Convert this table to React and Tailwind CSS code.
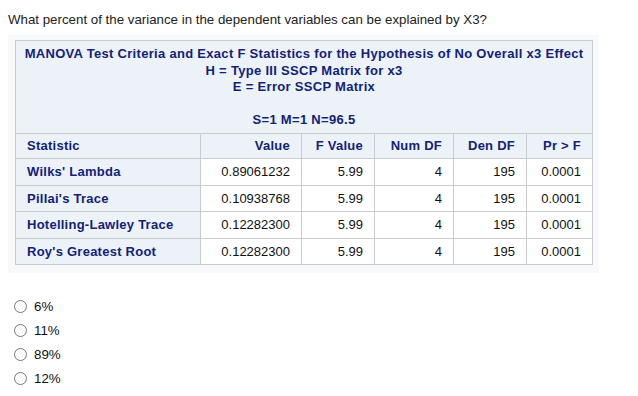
const rows = [
  ["Wilks' Lambda", "0.89061232", "5.99", "4", "195", "0.0001"],
  ["Pillai's Trace", "0.10938768", "5.99", "4", "195", "0.0001"],
  ["Hotelling-Lawley Trace", "0.12282300", "5.99", "4", "195", "0.0001"],
  ["Roy's Greatest Root", "0.12282300", "5.99", "4", "195", "0.0001"],
];

const options = ["6%", "11%", "89%", "12%"];

export default function App() {
  return (
    <div className="w-[638px] h-[396px] bg-white font-['Liberation_Sans',Arial,sans-serif] text-black">
      {/* Question */}
      <p className="pl-2 pt-[12px] text-[13.3px] leading-[16px] text-[#222]">
        What percent of the variance in the dependent variables can be explained by X3?
      </p>

      {/* SAS output */}
      <div className="ml-2 mt-[7px] w-[591px] h-[238px] bg-[#f8f9fb] pl-[7px] pt-[5px]">
        <table className="border-collapse table-fixed w-[577px] text-[13px] border border-[#bfc3c7]">
          <colgroup>
            <col className="w-[185px]" />
            <col className="w-[101px]" />
            <col className="w-[73px]" />
            <col className="w-[79px]" />
            <col className="w-[73px]" />
            <col className="w-[66px]" />
          </colgroup>
          <thead>
            <tr>
              <th colSpan={6} className="h-[93px] bg-[#edf2f9] border border-[#c8cbd0] align-top pt-[5px] text-center font-bold text-[#112277] leading-[16.5px] tracking-[0.3px]">
                <div>MANOVA Test Criteria and Exact F Statistics for the Hypothesis of No Overall x3 Effect</div>
                <div>H = Type III SSCP Matrix for x3</div>
                <div>E = Error SSCP Matrix</div>
                <div>&nbsp;</div>
                <div>S=1 M=1 N=96.5</div>
              </th>
            </tr>
            <tr className="h-[25px] bg-[#edf2f9] text-[#112277] font-bold tracking-[0.25px]">
              <th className="border border-[#c8cbd0] text-left px-[11px]">Statistic</th>
              <th className="border border-[#c8cbd0] text-right px-[11px]">Value</th>
              <th className="border border-[#c8cbd0] text-right px-[11px]">F Value</th>
              <th className="border border-[#c8cbd0] text-right px-[11px]">Num DF</th>
              <th className="border border-[#c8cbd0] text-right px-[11px]">Den DF</th>
              <th className="border border-[#c8cbd0] text-right px-[11px]">Pr &gt; F</th>
            </tr>
          </thead>
          <tbody>
            {rows.map((r) => (
              <tr key={r[0]} className="h-[26.5px]">
                <th className="bg-[#edf2f9] border border-[#c8cbd0] text-left px-[11px] font-bold text-[#112277] tracking-[0.25px]">{r[0]}</th>
                {r.slice(1).map((v, i) => (
                  <td key={i} className="bg-white border border-[#c8cbd0] text-right px-[11px] text-[#111]">{v}</td>
                ))}
              </tr>
            ))}
          </tbody>
        </table>
      </div>

      {/* Answers */}
      <div className="mt-[27px] pl-[14px] flex flex-col gap-[11px] text-[13.3px] leading-[13px] text-[#111]">
        {options.map((o) => (
          <label key={o} className="flex items-center gap-[7px]">
            <span className="w-[13px] h-[13px] rounded-full border border-[#767676] bg-white" />
            <span>{o}</span>
          </label>
        ))}
      </div>
    </div>
  );
}
